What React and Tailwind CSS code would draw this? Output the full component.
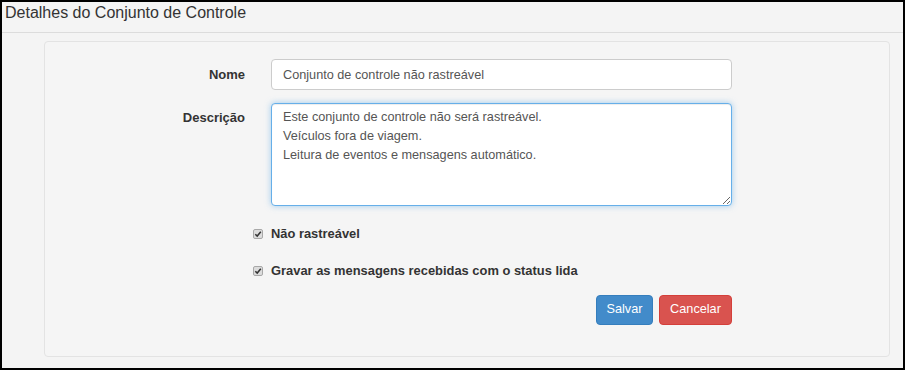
import React from "react";

const Check = () => (
  <svg width="10" height="10" viewBox="0 0 10 10" className="shrink-0">
    <rect x="0.5" y="0.5" width="9" height="9" rx="1.5" fill="#dcdcdc" stroke="#a8a8a8" />
    <path d="M2.3 5.2 L4.2 7.1 L7.8 2.8" fill="none" stroke="#333" strokeWidth="1.5" />
  </svg>
);

const App = () => {
  const desc =
    "Este conjunto de controle não será rastreável.\nVeículos fora de viagem.\nLeitura de eventos e mensagens automático.";

  return (
    <div
      className="w-[905px] h-[370px] border-2 border-black bg-[#f4f4f4] text-[#333] overflow-hidden"
      style={{ fontFamily: '"Liberation Sans", Arial, sans-serif' }}
    >
      <div className="pt-[1px] pb-[9px] pl-[3px] text-[16px] leading-[20px] border-b border-[#dcdcdc]">
        Detalhes do Conjunto de Controle
      </div>

      <div className="mt-[8px] ml-[42px] w-[846px] h-[316px] bg-[#f5f5f5] border border-[#e3e3e3] rounded-[4px] pt-[17px] text-[13px]">
        <div className="flex">
          <label className="w-[200px] text-right font-bold leading-[31px]">Nome</label>
          <input
            className="ml-[26px] w-[461px] h-[31px] bg-white border border-[#ccc] rounded-[4px] px-[11px] text-[12.7px] text-[#555] outline-none"
            defaultValue="Conjunto de controle não rastreável"
          />
        </div>

        <div className="flex mt-[13px]">
          <label className="w-[200px] text-right font-bold leading-[19px] pt-[5px]">Descrição</label>
          <textarea
            className="ml-[26px] w-[461px] h-[103px] bg-white border border-[#66afe9] rounded-[4px] px-[11px] py-[4px] text-[12.7px] leading-[19px] text-[#555] outline-none shadow-[inset_0_1px_1px_rgba(0,0,0,0.075),0_0_6px_rgba(102,175,233,0.6)]"
            defaultValue={desc}
          />
        </div>

        <div className="flex items-center ml-[208px] mt-[18px] h-[20px] gap-[8px]">
          <Check />
          <span className="font-bold text-[12.9px]">Não rastreável</span>
        </div>

        <div className="flex items-center ml-[208px] mt-[17px] h-[20px] gap-[8px]">
          <Check />
          <span className="font-bold text-[12.9px]">Gravar as mensagens recebidas com o status lida</span>
        </div>

        <div className="flex justify-end gap-[6px] ml-[226px] w-[461px] mt-[14px]">
          <button className="h-[30px] w-[57px] bg-[#428bca] border border-[#357ebd] rounded-[4px] text-white text-[12.7px] text-center">
            Salvar
          </button>
          <button className="h-[30px] w-[73px] bg-[#d9534f] border border-[#d43f3a] rounded-[4px] text-white text-[12.7px] text-center">
            Cancelar
          </button>
        </div>
      </div>
    </div>
  );
};

export default App;
